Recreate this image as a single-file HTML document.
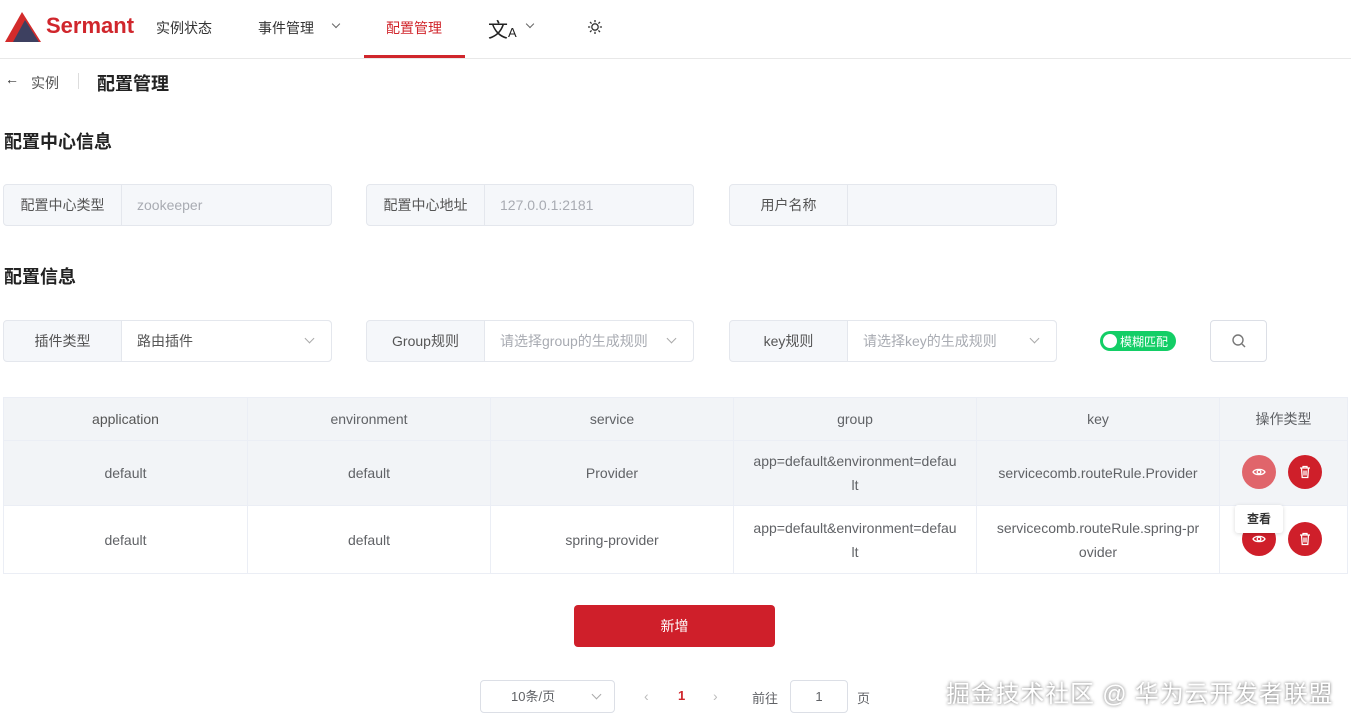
<!DOCTYPE html>
<html><head><meta charset="utf-8"><style>
*{box-sizing:border-box;margin:0;padding:0}
body{width:1351px;height:724px;background:#fff;font-family:"Liberation Sans","Noto Sans CJK SC",sans-serif;color:#606266;position:relative;overflow:hidden;font-size:14px}
.a{position:absolute;white-space:nowrap}
.hdr{position:absolute;left:0;top:0;width:1351px;height:59px;border-bottom:1px solid #e8e8e8}
.box{position:absolute;height:42px;border:1px solid #e4e7ed;border-radius:4px;background:#f5f7fa;display:flex}
.box .l{width:118px;border-right:1px solid #e4e7ed;display:flex;align-items:center;justify-content:center;color:#555}
.box .v{flex:1;display:flex;align-items:center;padding-left:15px;color:#a8abb2;position:relative}
.box .v.w{background:#fff;border-radius:0 4px 4px 0}
.chev{position:absolute;right:18px;top:14px;width:7px;height:7px;border-right:1px solid #aaa;border-bottom:1px solid #aaa;transform:rotate(45deg)}
h2{position:absolute;font-size:18px;color:#222;font-weight:bold}
table{position:absolute;left:3px;top:397px;border-collapse:collapse;width:1345px}
td{border:1px solid #ebeef5;text-align:center;color:#606266;font-size:14px;line-height:24px}
.btn{position:absolute;width:34px;height:34px;border-radius:50%;background:#cf1f2a}
.btn svg{position:absolute;left:10px;top:10px}
</style></head><body>
<div class="hdr"></div>
<svg class="a" style="left:5px;top:12px" width="36" height="31" viewBox="0 0 36 31"><polygon points="17,0 0,30 36,30" fill="#d32b2b"/><polygon points="20,8 8,30 34,30" fill="#3d4060"/></svg>
<div class="a" style="left:46px;top:13px;font-size:22px;font-weight:bold;color:#d0262c">Sermant</div>
<div class="a" style="left:156px;top:18px;color:#333">实例状态</div>
<div class="a" style="left:258px;top:18px;color:#333">事件管理</div>
<div class="a" style="left:333px;top:21px;width:6px;height:6px;border-right:1px solid #666;border-bottom:1px solid #666;transform:rotate(45deg)"></div>
<div class="a" style="left:386px;top:18px;color:#d0262c">配置管理</div>
<div class="a" style="left:364px;top:55px;width:101px;height:3px;background:#d0262c"></div>
<div class="a" style="left:488px;top:14px;font-size:20px;color:#222">文<span style="font-size:13px">A</span></div>
<div class="a" style="left:527px;top:21px;width:6px;height:6px;border-right:1px solid #666;border-bottom:1px solid #666;transform:rotate(45deg)"></div>
<svg class="a" style="left:587px;top:19px" width="16" height="16" viewBox="0 0 16 16" stroke="#333" stroke-width="1.3" fill="none"><circle cx="8" cy="8" r="3.2"/><path d="M8 1v2.2M8 12.8V15M1 8h2.2M12.8 8H15M3 3l1.6 1.6M11.4 11.4L13 13M3 13l1.6-1.6M11.4 4.6L13 3"/></svg>
<div class="a" style="left:5px;top:71px;color:#333">←</div>
<div class="a" style="left:31px;top:73px;color:#555">实例</div>
<div class="a" style="left:78px;top:73px;width:1px;height:16px;background:#ddd"></div>
<div class="a" style="left:97px;top:70px;font-size:18px;font-weight:bold;color:#222">配置管理</div>
<h2 style="left:4px;top:128px">配置中心信息</h2>
<div class="box" style="left:3px;top:184px;width:329px"><div class="l">配置中心类型</div><div class="v">zookeeper</div></div>
<div class="box" style="left:366px;top:184px;width:328px"><div class="l">配置中心地址</div><div class="v">127.0.0.1:2181</div></div>
<div class="box" style="left:729px;top:184px;width:328px"><div class="l">用户名称</div><div class="v"></div></div>
<h2 style="left:4px;top:263px">配置信息</h2>
<div class="box" style="left:3px;top:320px;width:329px"><div class="l">插件类型</div><div class="v w" style="color:#555">路由插件<i class="chev"></i></div></div>
<div class="box" style="left:366px;top:320px;width:328px"><div class="l">Group规则</div><div class="v w">请选择group的生成规则<i class="chev"></i></div></div>
<div class="box" style="left:729px;top:320px;width:328px"><div class="l">key规则</div><div class="v w">请选择key的生成规则<i class="chev"></i></div></div>
<div class="a" style="left:1100px;top:331px;width:76px;height:20px;border-radius:10px;background:#13ce66"><div style="position:absolute;left:3px;top:3px;width:14px;height:14px;border-radius:50%;background:#fff"></div><span style="position:absolute;left:20px;top:2px;font-size:12px;color:#fff">模糊匹配</span></div>
<div class="a" style="left:1210px;top:320px;width:57px;height:42px;border:1px solid #dcdfe6;border-radius:4px"><svg style="position:absolute;left:21px;top:13px" width="14" height="14" viewBox="0 0 14 14"><circle cx="6" cy="6" r="5" fill="none" stroke="#777" stroke-width="1.4"/><path d="M10 10l3 3" stroke="#777" stroke-width="1.4"/></svg></div>
<table>
<tr style="height:43px;background:#f2f4f7"><td style="width:244px;color:#555">application</td><td style="width:243px">environment</td><td style="width:243px">service</td><td style="width:243px">group</td><td style="width:243px">key</td><td>操作类型</td></tr>
<tr style="height:65px;background:#f2f4f7"><td>default</td><td>default</td><td>Provider</td><td>app=default&amp;environment=defau<br>lt</td><td>servicecomb.routeRule.Provider</td><td></td></tr>
<tr style="height:68px"><td>default</td><td>default</td><td>spring-provider</td><td>app=default&amp;environment=defau<br>lt</td><td>servicecomb.routeRule.spring-pr<br>ovider</td><td></td></tr>
</table>
<div class="btn" style="left:1242px;top:455px;background:#e0656b"><svg width="14" height="14" viewBox="0 0 14 14" fill="none" stroke="#fff" stroke-width="1.3"><path d="M1 7c2-3.5 10-3.5 12 0c-2 3.5-10 3.5-12 0z"/><circle cx="7" cy="7" r="1.8"/></svg></div>
<div class="btn" style="left:1288px;top:455px"><svg width="14" height="14" viewBox="0 0 14 14" fill="none" stroke="#fff" stroke-width="1.3"><path d="M2 3h10M5 3V1.5h4V3M3.5 3l.7 9.5h5.6l.7-9.5M6 5.5v5M8 5.5v5"/></svg></div>
<div class="btn" style="left:1242px;top:522px"><svg width="14" height="14" viewBox="0 0 14 14" fill="none" stroke="#fff" stroke-width="1.3"><path d="M1 7c2-3.5 10-3.5 12 0c-2 3.5-10 3.5-12 0z"/><circle cx="7" cy="7" r="1.8"/></svg></div>
<div class="btn" style="left:1288px;top:522px"><svg width="14" height="14" viewBox="0 0 14 14" fill="none" stroke="#fff" stroke-width="1.3"><path d="M2 3h10M5 3V1.5h4V3M3.5 3l.7 9.5h5.6l.7-9.5M6 5.5v5M8 5.5v5"/></svg></div>
<div class="a" style="left:1235px;top:505px;width:48px;height:28px;background:#fff;box-shadow:0 1px 4px rgba(0,0,0,.15);border-radius:3px;text-align:center;line-height:28px;font-size:12px;color:#333;font-weight:bold">查看</div>
<div class="a" style="left:574px;top:605px;width:201px;height:42px;background:#cf1f2a;border-radius:4px;color:#fff;text-align:center;line-height:42px">新增</div>
<div class="a" style="left:480px;top:680px;width:135px;height:33px;border:1px solid #dcdfe6;border-radius:4px;line-height:31px;padding-left:30px;font-size:13px">10条/页<i class="chev" style="top:10px;right:14px"></i></div>
<div class="a" style="left:644px;top:688px;color:#bbb">‹</div>
<div class="a" style="left:678px;top:688px;color:#d0262c;font-weight:bold;font-size:13px">1</div>
<div class="a" style="left:713px;top:688px;color:#bbb">›</div>
<div class="a" style="left:752px;top:688px;font-size:13px">前往</div>
<div class="a" style="left:790px;top:680px;width:58px;height:33px;border:1px solid #dcdfe6;border-radius:4px;text-align:center;line-height:31px;font-size:13px">1</div>
<div class="a" style="left:857px;top:688px;font-size:13px">页</div>
<div class="a" style="left:946px;top:674px;font-size:24px;letter-spacing:0.8px;color:#fff;text-shadow:0 0 3px rgba(0,0,0,.6)">掘金技术社区 @ 华为云开发者联盟</div>
</body></html>
